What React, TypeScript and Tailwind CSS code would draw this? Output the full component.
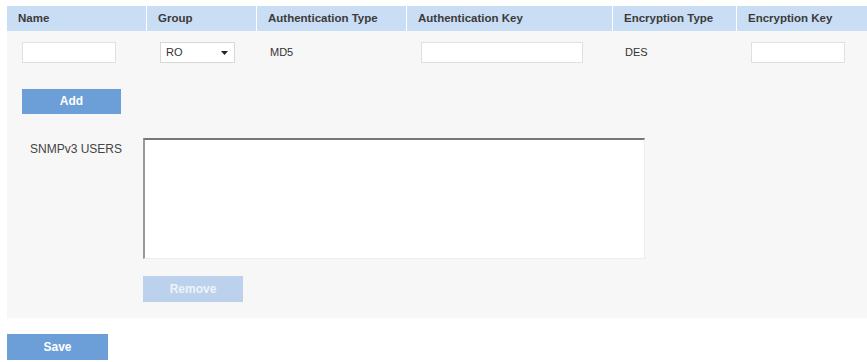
import React from 'react';

const font = { fontFamily: '"Liberation Sans", Arial, sans-serif' };

export default function App() {
  const columns = [
    { label: 'Name', width: 'w-[139px]' },
    { label: 'Group', width: 'w-[110px]' },
    { label: 'Authentication Type', width: 'w-[150px]' },
    { label: 'Authentication Key', width: 'w-[206px]' },
    { label: 'Encryption Type', width: 'w-[124px]' },
    { label: 'Encryption Key', width: 'w-[131px]' },
  ];

  return (
    <div className="w-[867px] h-[362px] bg-white pt-[6px]" style={font}>
      <div className="ml-[7px] bg-[#f7f7f7] h-[312px]">
        {/* header */}
        <div className="flex h-[25px] bg-[#c9ddf4]">
          {columns.map((c, i) => (
            <div
              key={c.label}
              className={`${c.width} flex items-center pl-[11px] text-[11.5px] font-bold text-[#3b3b3b] ${i > 0 ? 'border-l border-white' : ''}`}
            >
              {c.label}
            </div>
          ))}
        </div>

        {/* input row */}
        <div className="flex items-center h-[21px] mt-[11px] text-[11px] text-[#333]">
          <div className="w-[139px] pl-[15px]">
            <div className="w-[94px] h-[21px] bg-white border border-[#e0e0e0]" />
          </div>
          <div className="w-[110px] pl-[14px]">
            <div className="w-[75px] h-[21px] bg-white border border-[#d8d8d8] flex items-center justify-between pl-[5px] pr-[6px]">
              <span>RO</span>
              <svg width="7" height="4" viewBox="0 0 7 4">
                <path d="M0 0 L7 0 L3.5 4 Z" fill="#222" />
              </svg>
            </div>
          </div>
          <div className="w-[150px] pl-[14px]">MD5</div>
          <div className="w-[206px] pl-[15px]">
            <div className="w-[162px] h-[21px] bg-white border border-[#e0e0e0]" />
          </div>
          <div className="w-[124px] pl-[13px]">DES</div>
          <div className="w-[131px] pl-[15px]">
            <div className="w-[94px] h-[21px] bg-white border border-[#e0e0e0]" />
          </div>
        </div>

        {/* add */}
        <div className="ml-[15px] mt-[25px]">
          <button className="w-[99px] h-[25px] bg-[#6c9fd7] text-white text-[12px] font-bold">Add</button>
        </div>

        {/* users list */}
        <div className="flex mt-[24px]">
          <div className="w-[136px] pl-[23px] pt-[2px] text-[12px] text-[#444]">SNMPv3 USERS</div>
          <div className="flex flex-col">
            <div className="w-[502px] h-[121px] bg-white border-t-2 border-l-2 border-t-[#777] border-l-[#999] border-r border-b border-r-[#ececec] border-b-[#ececec]" />
            <button
              disabled
              className="mt-[17px] w-[100px] h-[26px] bg-[#bcd2ec] text-[#eef3fa] text-[12px] font-bold"
            >
              Remove
            </button>
          </div>
        </div>
      </div>

      {/* save */}
      <div className="ml-[7px] mt-[16px]">
        <button className="w-[101px] h-[26px] bg-[#6c9fd7] text-white text-[12px] font-bold">Save</button>
      </div>
    </div>
  );
}
